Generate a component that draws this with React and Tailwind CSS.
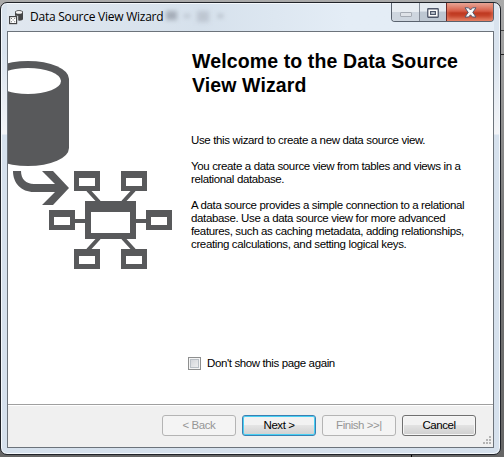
import React from "react";

const nodes = [
  [74, 171],
  [121, 171],
  [49, 210],
  [146, 210],
  [74, 249],
  [121, 249],
];

function Illustration() {
  return (
    <svg width="166" height="210" viewBox="8 61 166 210" fill="#58595b" className="block">
      <path d="M-13 79a41 18 0 0 1 82 0V148a41 18 0 0 1-82 0Z" />
      <ellipse cx="28" cy="81" rx="33" ry="13" fill="#fff" />
      <path d="M13 171H21C21 179 26 184 34 184H55L42 171H53L69 188L53 205H42L55 192H34C21 192 13 183 13 171Z" />
      <path
        d="M88 190L99 202M134 190L123 202M99 238L88 250M123 238L134 250M75 221H85M136 221H146"
        stroke="#58595b"
        strokeWidth="4"
      />
      <path fillRule="evenodd" d="M85 201H136V239H85ZM91 212V233H130V212Z" />
      {nodes.map(([x, y]) => (
        <path key={x + "-" + y} fillRule="evenodd" d={`M${x} ${y}h26v20h-26ZM${x + 5} ${y + 7}v8h16v-8Z`} />
      ))}
    </svg>
  );
}

function AppIcon() {
  return (
    <svg width="15" height="16" viewBox="0 0 15 16" className="block shrink-0">
      <path d="M6 3C6 .6 14 .6 14 3V10C14 11.4 11 12 9 11.6L6 8Z" fill="#454547" />
      <ellipse cx="10" cy="3.4" rx="3.2" ry="1.3" fill="#f5f5f5" />
      <rect x="-0.2" y="6.8" width="9.4" height="9" fill="#e6ebf1" />
      <rect x="0.6" y="7.6" width="7" height="7" fill="#fff" stroke="#454547" strokeWidth="1.2" />
      <path d="M2 9h1v1H2zM5.2 9h1v1h-1zM2 12.2h1v1H2zM5.2 12.2h1v1h-1zM3.6 10.6h1v1h-1z" fill="#777" />
    </svg>
  );
}

function CaptionButtons() {
  return (
    <div className="flex h-[19px] w-[103px] overflow-hidden rounded-b-[4px] border border-t-0 border-[#59626e]">
      <div className="flex w-[28px] items-center justify-center border-r border-[#838b96] bg-linear-to-b from-[#e8edf2] from-50% to-[#ced6df] to-50%">
        <svg width="12" height="5" className="mt-[4px]">
          <rect x="0.5" y="0.5" width="11" height="4" rx="0.5" fill="#dfe3e8" stroke="#a5abb3" />
        </svg>
      </div>
      <div className="flex w-[27px] items-center justify-center border-r border-[#6b2b2b] bg-linear-to-b from-[#e4eaf0] from-45% to-[#bdc7d2] to-50%">
        <svg width="12" height="10" className="mt-px">
          <rect x="0.75" y="0.75" width="10.5" height="8.5" rx="0.5" fill="#fafafa" stroke="#4e5669" strokeWidth="1.3" />
          <rect x="3.6" y="3.6" width="4.8" height="2.8" fill="#d1d8e0" stroke="#4e5669" strokeWidth="1.2" />
        </svg>
      </div>
      <div className="flex flex-1 items-center justify-center bg-linear-to-b from-[#e7a698] via-[#d65b45] via-45% to-[#c03a22] to-55% shadow-[inset_0_-3px_4px_#e7866a]">
        <svg width="13" height="11" viewBox="0 0 13 11">
          <path d="M1 .8H4.5L6.5 3 8.5.8H12L8.8 5.4 12 10H8.5L6.5 7.8 4.5 10H1L4.2 5.4Z" fill="#fafafa" stroke="#535b70" />
        </svg>
      </div>
    </div>
  );
}

const buttonStyles = {
  disabled: "border-[#b4b4b4] bg-[#f4f4f4] text-[#969696]",
  primary: "border-[#3c7fb1] bg-linear-to-b from-[#f2f2f2] from-45% via-[#e4e4e4] via-50% to-[#d0d0d0] shadow-[inset_0_0_0_1px_#48d0f4]",
  normal: "border-[#707070] bg-linear-to-b from-[#f2f2f2] from-45% via-[#e2e2e2] via-50% to-[#cfcfcf] shadow-[inset_0_0_0_1px_#f6f6f6]",
};

function Button({ kind, children }) {
  return (
    <button
      className={`flex h-[21px] w-[74px] items-center justify-center rounded-[3px] border pt-px whitespace-nowrap ${buttonStyles[kind]}`}
    >
      {children}
    </button>
  );
}

export default function App() {
  return (
    <div className="flex h-[457px] w-[504px] flex-col overflow-hidden bg-linear-to-b from-[#aaa] via-[#777] to-[#666] pt-[2px] font-['Liberation_Sans',Arial,sans-serif] text-[11.5px] text-black">
      <div className="flex h-[453px] shrink-0">
        <div className="flex w-[501px] shrink-0 flex-col rounded-[7px] border border-[#202329] bg-linear-to-b from-[#d9e3ee] from-[50px] via-[#f3f4f7] via-[131px] to-[#d6e1ed] to-[132px] px-[6px] pb-[6px] shadow-[inset_0_0_0_1px_#f4f8fc]">
          <div className="flex h-[28px] shrink-0 items-start justify-between bg-linear-to-r from-[#e0e7ef] via-[#d6e1ec] via-40% to-[#e4edf6] to-70% shadow-[inset_0_1px_0_#f4f8fc]">
            <div className="flex items-start pt-[6px] pl-[2px]">
              <AppIcon />
              <span className="mt-px ml-[6px] font-['Open_Sans','Noto_Sans',sans-serif] text-[12px] leading-[14px] tracking-[-0.25px] whitespace-nowrap">
                Data Source View Wizard
              </span>
              <div className="mt-[2px] ml-[3px] flex gap-[7px] blur-[2px]">
                <span className="h-[9px] w-[11px] bg-[#a5adb8]" />
                <span className="mt-[3px] h-[4px] w-[6px] bg-[#bdc6d1]" />
                <span className="mr-[2px] h-[11px] w-[12px] bg-[#bdc6d1]" />
                <span className="mt-[3px] h-[4px] w-[5px] bg-[#b4bdc8]" />
              </div>
            </div>
            <CaptionButtons />
          </div>
          <div className="flex min-h-0 flex-1 flex-col border border-[#6c737b] bg-white">
            <div className="flex min-h-0 flex-1">
              <div className="w-[180px] shrink-0 pt-[29px]">
                <Illustration />
              </div>
              <div className="pt-[17px] whitespace-nowrap">
                <h1 className="pl-[4px] text-[19.5px] leading-[24px] font-bold tracking-[0.12px]">
                  Welcome to the Data Source
                  <br />
                  View Wizard
                </h1>
                <div className="space-y-[13px] pt-[37px] pl-[3px] leading-[13px] tracking-[-0.36px]">
                  <p>Use this wizard to create a new data source view.</p>
                  <p>
                    You create a data source view from tables and views in a
                    <br />
                    relational database.
                  </p>
                  <p>
                    A data source provides a simple connection to a relational
                    <br />
                    database. Use a data source view for more advanced
                    <br />
                    features, such as caching metadata, adding relationships,
                    <br />
                    creating calculations, and setting logical keys.
                  </p>
                </div>
                <label className="mt-[106px] flex h-[13px] items-center gap-[6px] tracking-[-0.38px]">
                  <span className="size-[13px] border border-[#8e8f8f] bg-linear-to-br from-[#cdd0d5] to-[#f3f3f3] shadow-[inset_0_0_0_1px_#f4f4f4,inset_0_0_0_2px_#b9bfc5]" />
                  <span>Don't show this page again</span>
                </label>
              </div>
            </div>
            <div className="flex h-[43px] shrink-0 border-t border-[#a0a0a0] bg-[#f0f0f0] shadow-[inset_0_1px_0_#fff]">
              <div className="flex flex-1 gap-[6px] pt-[10px] pl-[154px] tracking-[-0.45px]">
                <Button kind="disabled">&lt; Back</Button>
                <Button kind="primary">Next &gt;</Button>
                <Button kind="disabled">Finish &gt;&gt;|</Button>
                <Button kind="normal">Cancel</Button>
              </div>
              <svg width="10" height="10" className="mr-px mb-px self-end" fill="#b4b4b4">
                <path d="M7 0h2v2H7zM4 3h2v2H4zM7 3h2v2H7zM1 6h2v2H1zM4 6h2v2H4zM7 6h2v2H7z" />
              </svg>
            </div>
          </div>
        </div>
        <div className="flex flex-1 flex-col gap-[23px] pt-[28px]">
          <span className="h-px bg-[#444]" />
          <span className="h-px bg-[#222]" />
        </div>
      </div>
      <div className="h-[2px] pl-[411px]">
        <div className="h-full w-px bg-black" />
      </div>
    </div>
  );
}
